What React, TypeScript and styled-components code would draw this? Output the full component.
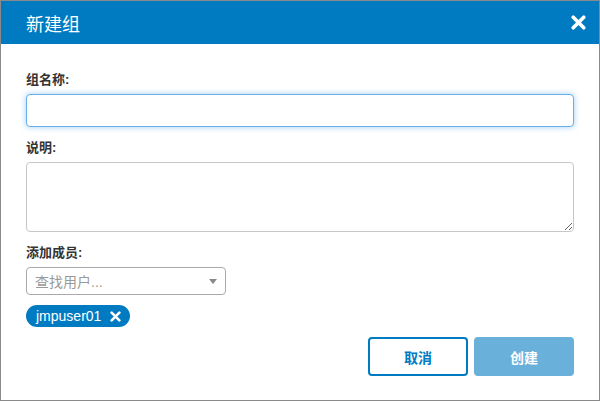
import styled, { createGlobalStyle } from 'styled-components';

const Global = createGlobalStyle`
  html, body {
    margin: 0;
    padding: 0;
    background: #fff;
  }
  * {
    box-sizing: border-box;
  }
`;

const Dialog = styled.div`
  width: 600px;
  height: 401px;
  border: 1px solid #8a8a8a;
  display: flex;
  flex-direction: column;
  font-family: 'Liberation Sans', 'Noto Sans CJK SC', sans-serif;
  color: #333;
  background: #fff;
`;

const Header = styled.header`
  height: 43px;
  background: #007bc2;
  color: #fff;
  display: flex;
  align-items: center;
  justify-content: space-between;
  padding: 0 13px 0 25px;
`;

const Title = styled.h2`
  margin: 0;
  font-size: 18px;
  font-weight: normal;
`;

const CloseBtn = styled.button`
  border: 0;
  background: transparent;
  padding: 0;
  display: flex;
  cursor: pointer;
`;

const Body = styled.div`
  flex: 1;
  display: flex;
  flex-direction: column;
  padding: 27px 25px 0 25px;
`;

const Label = styled.label`
  display: block;
  font-size: 13px;
  font-weight: bold;
  color: #333;
  margin-bottom: 6px;
  line-height: 17px;
`;

const Field = styled.div<{ $last?: boolean }>`
  margin-bottom: ${(p) => (p.$last ? '0' : '12px')};
`;

const TextInput = styled.input`
  display: block;
  width: 100%;
  height: 33px;
  border: 1px solid #66afe9;
  border-radius: 4px;
  box-shadow: 0 0 6px rgba(102, 175, 233, 0.6);
  outline: none;
  font-size: 13px;
  padding: 0 8px;
`;

const TextArea = styled.textarea`
  display: block;
  width: 100%;
  height: 70px;
  border: 1px solid #c7c7c7;
  border-radius: 4px;
  resize: vertical;
  font-size: 13px;
  font-family: inherit;
  padding: 6px 8px;
`;

const Select = styled.div`
  width: 200px;
  height: 28px;
  border: 1px solid #aaa;
  border-radius: 4px;
  display: flex;
  align-items: center;
  justify-content: space-between;
  padding: 0 8px 0 8px;
  font-size: 14px;
  color: #999;
`;

const Caret = styled.span`
  width: 0;
  height: 0;
  border-left: 4px solid transparent;
  border-right: 4px solid transparent;
  border-top: 5px solid #888;
`;

const Chips = styled.div`
  display: flex;
  gap: 6px;
  margin-top: 10px;
`;

const Chip = styled.span`
  display: inline-flex;
  align-items: center;
  gap: 9px;
  height: 22px;
  padding: 0 9px 0 10px;
  border-radius: 11px;
  background: #007bc2;
  color: #fff;
  font-size: 14px;
`;

const Footer = styled.div`
  display: flex;
  justify-content: flex-end;
  gap: 6px;
  margin-top: 10px;
`;

const Button = styled.button<{ $primary?: boolean }>`
  width: 100px;
  height: 39px;
  border-radius: 4px;
  font-family: inherit;
  font-size: 14px;
  font-weight: bold;
  cursor: pointer;
  border: 2px solid ${(p) => (p.$primary ? '#69b0da' : '#007bc2')};
  background: ${(p) => (p.$primary ? '#69b0da' : '#fff')};
  color: ${(p) => (p.$primary ? '#fff' : '#007bc2')};
`;

const XIcon = ({ size, stroke }: { size: number; stroke: number }) => (
  <svg width={size} height={size} viewBox="0 0 10 10">
    <path d="M1.5 1.5 L8.5 8.5 M8.5 1.5 L1.5 8.5" stroke="#fff" strokeWidth={stroke} strokeLinecap="round" />
  </svg>
);

export default function App() {
  return (
    <Dialog>
      <Global />
      <Header>
        <Title>新建组</Title>
        <CloseBtn>
          <XIcon size={15} stroke={2.4} />
        </CloseBtn>
      </Header>
      <Body>
        <Field>
          <Label>组名称:</Label>
          <TextInput />
        </Field>
        <Field>
          <Label>说明:</Label>
          <TextArea />
        </Field>
        <Field $last>
          <Label>添加成员:</Label>
          <Select>
            <span>查找用户...</span>
            <Caret />
          </Select>
          <Chips>
            <Chip>
              jmpuser01
              <XIcon size={11} stroke={2.4} />
            </Chip>
          </Chips>
        </Field>
        <Footer>
          <Button>取消</Button>
          <Button $primary>创建</Button>
        </Footer>
      </Body>
    </Dialog>
  );
}
